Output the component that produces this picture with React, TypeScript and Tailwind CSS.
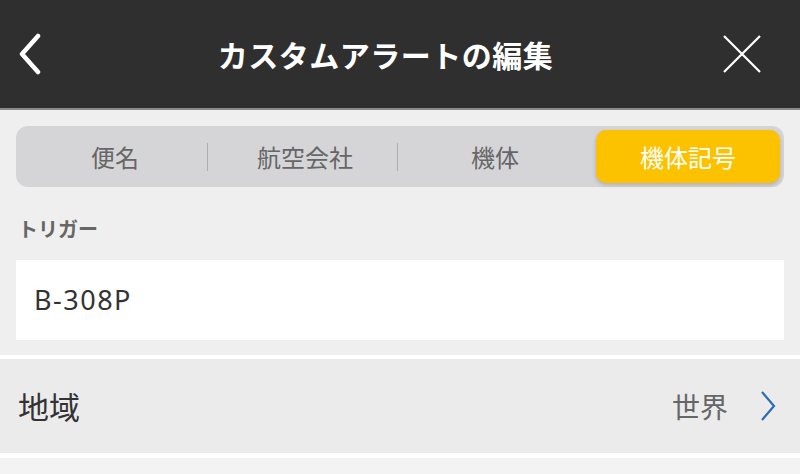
import React from "react";

const font = { fontFamily: '"Noto Sans CJK JP", "Noto Sans", sans-serif' };

export default function App() {
  const tabs = ["便名", "航空会社", "機体", "機体記号"];
  return (
    <div className="w-[800px] h-[474px] overflow-hidden bg-[#f3f3f3]" style={font}>
      <div className="h-[110px] bg-[#2f2f2f] border-b-2 border-[#8c8c8c] flex items-center pl-[17px] pr-[38px]">
        <svg width="26" height="42" viewBox="0 0 26 42" className="shrink-0">
          <path d="M21 3 L5 21 L21 39" fill="none" stroke="white" strokeWidth="4.5" strokeLinecap="round" strokeLinejoin="round" />
        </svg>
        <div className="flex-1 text-center text-white text-[30px] font-bold tracking-[0.5px] pl-[6px]">カスタムアラートの編集</div>
        <svg width="40" height="40" viewBox="0 0 40 40" className="shrink-0">
          <path d="M2 2 L38 38 M38 2 L2 38" fill="none" stroke="white" strokeWidth="2.2" />
        </svg>
      </div>
      <div className="bg-[#efefef] px-4 pt-4 pb-[15px]">
        <div className="h-[61px] rounded-[12px] bg-[#d5d5d7] flex items-center px-1">
          {tabs.map((t, i) => (
            <div key={t} className="flex-1 flex items-center h-[53px] relative">
              {i > 0 && i < 3 && <div className="absolute left-[-3px] top-[13px] w-px h-[28px] bg-[#aeaeb0]" />}
              {i === 3 ? (
                <div className="flex-1 ml-[6px] h-full rounded-[10px] bg-[#fcc200] shadow-[0_2px_4px_rgba(0,0,0,0.18)] flex items-center justify-center text-white text-[24px]">
                  {t}
                </div>
              ) : (
                <div className="flex-1 text-center text-[#666] text-[24px]">{t}</div>
              )}
            </div>
          ))}
        </div>
        <div className="mt-[29px] text-[20px] leading-[25px] font-bold text-[#666] pl-[2px]">トリガー</div>
        <div className="mt-[19px] h-[80px] bg-white flex items-center pl-[18px]">
          <span className="text-[27px] text-[#333] tracking-[1.5px]" style={{ fontFamily: '"Noto Sans", sans-serif' }}>B-308P</span>
        </div>
      </div>
      <div className="h-[4px] bg-white" />
      <div className="h-[94px] bg-[#ebebeb] flex items-center pl-[18px] pr-[24px]">
        <div className="text-[31px] text-[#333] flex-1">地域</div>
        <div className="text-[28px] text-[#666] mr-[32px]">世界</div>
        <svg width="16" height="30" viewBox="0 0 16 30">
          <path d="M2 1 L14 15 L2 29" fill="none" stroke="#2a6db5" strokeWidth="2.2" />
        </svg>
      </div>
      <div className="h-[5px] bg-white" />
    </div>
  );
}
